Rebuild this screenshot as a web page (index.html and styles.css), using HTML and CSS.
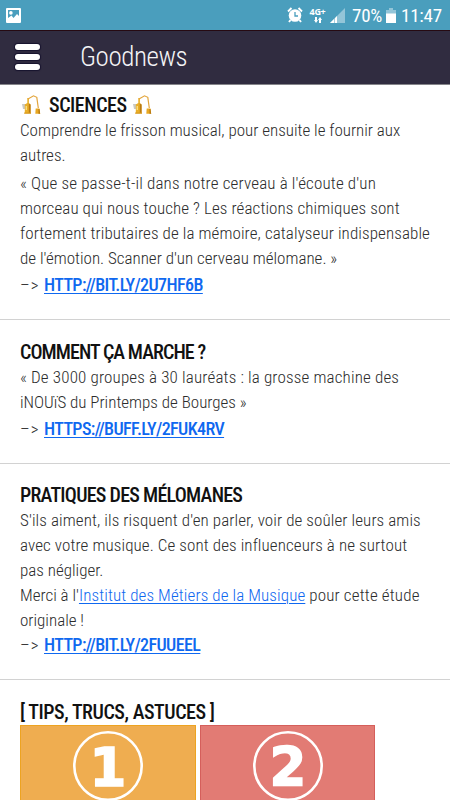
FILE: index.html
```html
<!DOCTYPE html>
<html lang="fr">
<head>
    <meta charset="UTF-8">
    <meta name="viewport" content="width=device-width, initial-scale=1.0">
    <title>Goodnews</title>
    <link rel="stylesheet" href="styles.css">
</head>
<body>
    <!-- Alembic drawing shared by the headings -->
    <svg class="defs" width="0" height="0">
        <symbol id="alembic" viewBox="0 0 20 20">
            <path d="M1 9h4v5H2z" fill="#c9c9c4"/>
            <path d="M6.300 3h1.600v5l1.600 1.500V18H3.800V9.500L6.300 8z" fill="#e9ae28"/>
            <path d="M7.800 8.500V18h1.800V9.500z" fill="#b97a12"/>
            <path d="M4.600 11h1.300v4H4.600z" fill="#fbe08a"/>
            <path d="M7 4L12.500 .8l3.300 1.500L17.300 13" fill="none" stroke="#e3a53c" stroke-width="1.200"/>
            <path d="M3.200 17.500h6.800v1.300H3.200z" fill="#d99a1c"/>
            <path d="M14.700 13.500h3.800l.7 5.300h-4.900z" fill="#e8a822"/>
            <path d="M17.500 14h1l.7 4.800h-1.700z" fill="#b97a12"/>
        </symbol>
    </svg>

    <!-- Phone status bar -->
    <div class="status-bar">
        <svg class="picture-icon" width="15" height="15" viewBox="0 0 15 15">
            <path fill="#fff" fill-rule="evenodd" d="M1 0h13a1 1 0 0 1 1 1v13a1 1 0 0 1-1 1H1a1 1 0 0 1-1-1V1a1 1 0 0 1 1-1zM2 2v8l3.500-2.500L7.500 10 11 6l2 2V2z"/>
            <circle cx="4.900" cy="4.900" r="1.800" fill="#fff"/>
        </svg>
        <svg class="alarm-icon" width="16" height="16" viewBox="0 0 16 16">
            <circle cx="8" cy="8.500" r="6.300" fill="#fff"/>
            <path d="M1 4.500L4.500 1M15 4.500L11.500 1M3.500 13L2 15M12.500 13L14 15" stroke="#fff" stroke-width="1.900"/>
            <path d="M8 5v4h3" fill="none" stroke="#4a9ebd" stroke-width="1.300"/>
        </svg>
        <div class="network">
            <span>4G+</span>
            <svg width="10" height="6" viewBox="0 0 10 6">
                <path d="M2 0h2v3h1L3 6 1 3h1zM6 6h2V3h1L7 0 5 3h1z" fill="#fff"/>
            </svg>
        </div>
        <svg class="signal-icon" width="15" height="15" viewBox="0 0 15 15">
            <path d="M15 0v15H0z" fill="#93c5d8"/>
            <path d="M7 8v7H4.800v-4.800zM4 11v4H0z" fill="#fff"/>
        </svg>
        <span class="battery-level">70%</span>
        <svg class="battery-icon" width="10" height="15" viewBox="0 0 10 15">
            <path d="M3 0h4v2h3v4H0V2h3z" fill="#93c5d8"/>
            <path d="M0 5.500h10V15H0z" fill="#fff"/>
        </svg>
        <span class="clock">11:47</span>
    </div>

    <!-- App header -->
    <header>
        <div class="menu-button">
            <span></span>
            <span></span>
            <span></span>
        </div>
        <h1>Goodnews</h1>
    </header>

    <!-- News list -->
    <main>
        <article class="first">
            <h2 class="sciences">
                <svg width="20" height="20"><use href="#alembic"/></svg>
                SCIENCES
                <svg width="20" height="20"><use href="#alembic"/></svg>
            </h2>
            <p>
                <span class="line">Comprendre le frisson musical, pour ensuite le fournir aux</span>
                <span class="line">autres.</span>
            </p>
            <p class="quote">
                <span class="line wider">« Que se passe-t-il dans notre cerveau à l'écoute d'un</span>
                <span class="line wide">morceau qui nous touche ? Les réactions chimiques sont</span>
                <span class="line wide">fortement tributaires de la mémoire, catalyseur indispensable</span>
                <span class="line">de l'émotion. Scanner d'un cerveau mélomane. »</span>
            </p>
            <p class="more"><span class="arrow">–&gt;</span><a href="#">HTTP://BIT.LY/2U7HF6B</a></p>
        </article>

        <article>
            <h2 class="tight">COMMENT ÇA MARCHE ?</h2>
            <p>
                <span class="line wider">« De 3000 groupes à 30 lauréats : la grosse machine des</span>
                <span class="line">iNOUïS du Printemps de Bourges »</span>
            </p>
            <p class="more"><span class="arrow">–&gt;</span><a href="#">HTTPS://BUFF.LY/2FUK4RV</a></p>
        </article>

        <article class="raised">
            <h2 class="snug">PRATIQUES DES MÉLOMANES</h2>
            <p>
                <span class="line wide">S'ils aiment, ils risquent d'en parler, voir de soûler leurs amis</span>
                <span class="line wide">avec votre musique. Ce sont des influenceurs à ne surtout</span>
                <span class="line">pas négliger.</span>
                <span class="line">Merci à l'<a class="wide" href="#">Institut des Métiers de la Musique</a><span class="wider"> pour cette étude</span></span>
                <span class="line">originale !</span>
            </p>
            <p class="more close"><span class="arrow">–&gt;</span><a href="#">HTTP://BIT.LY/2FUUEEL</a></p>
        </article>

        <article>
            <h2>[ TIPS, TRUCS, ASTUCES ]</h2>
            <div class="tips">
                <div class="tip orange">
                    <svg width="72" height="72" viewBox="0 0 72 72">
                        <circle cx="36" cy="36" r="33.700"/>
                        <text x="36" y="56">1</text>
                    </svg>
                </div>
                <div class="tip red">
                    <svg width="72" height="72" viewBox="0 0 72 72">
                        <circle cx="36" cy="36" r="33.700"/>
                        <text x="36" y="55">2</text>
                    </svg>
                </div>
            </div>
        </article>
    </main>
</body>
</html>
```
FILE: styles.css
```css
/* General body styles: condensed light text on white */
body {
    margin: 0;
    height: 800px;
    overflow: hidden;
    background-color: white;
    color: #2c2c2c;
    font-family: Roboto, "Liberation Sans", sans-serif;
    font-stretch: 75%;
    font-weight: 300;
    font-size: 17px;
    line-height: 25px;
}

.defs {
    display: block;
}

/* Status bar */
.status-bar {
    display: flex;
    align-items: center;
    height: 30px;
    padding: 0 8px 0 6px;
    background-color: #4a9ebd;
    color: white;
    font-size: 19px;
    font-weight: 400;
    white-space: nowrap;
}

.status-bar svg {
    flex: none;
}

.alarm-icon {
    margin-left: auto;
}

.network {
    display: flex;
    flex-direction: column;
    align-items: center;
    width: 17px;
    margin: 0 4px 0 6px;
    font: bold 9px "Open Sans", sans-serif;
    line-height: 10px;
    letter-spacing: -0.3px;
}

.battery-level {
    width: 30px;
    margin: 0 4px 0 7px;
    letter-spacing: -0.2px;
}

.clock {
    width: 41px;
    margin: 0 0 0 5px;
    letter-spacing: -0.2px;
}

/* App header */
header {
    display: flex;
    align-items: center;
    box-sizing: border-box;
    height: 55px;
    padding-left: 15px;
    background-color: #302c40;
    border-top: 1px solid #260a12;
    border-bottom: 1px solid #85858a;
    color: #f4f4f6;
}

.menu-button {
    display: flex;
    flex-direction: column;
    gap: 4px;
    width: 25px;
    margin: 0 40px 2px 0;
}

.menu-button span {
    height: 6px;
    border-radius: 3px;
    background-color: white;
    box-shadow: 0 0 1px 1px #17132e;
}

h1 {
    margin: 0;
    font-size: 27px;
    font-weight: 300;
    letter-spacing: -0.45px;
}

/* Articles separated by a thin line */
article {
    padding: 20px 20px 21px;
    border-bottom: 1px solid #d2d2d2;
}

article.first {
    padding-top: 8px;
}

article.raised {
    padding-top: 19px;
}

h2 {
    margin: 0 0 1px;
    color: #111;
    font-size: 20px;
    font-weight: 500;
    line-height: 24px;
    letter-spacing: -0.45px;
}

h2.tight {
    letter-spacing: -0.93px;
}

h2.snug {
    letter-spacing: -0.74px;
}

.sciences {
    display: flex;
    align-items: center;
    gap: 5px;
}

.sciences svg:first-child {
    margin: 0 3px 0 1px;
}

p {
    margin: 0;
}

.quote {
    margin-top: 3px;
}

.more {
    margin-top: 2px;
}

.more.close {
    margin-top: 0;
}

.line {
    display: block;
    white-space: nowrap;
}

.wide {
    letter-spacing: 0.1px;
}

.wider {
    letter-spacing: 0.16px;
}

.arrow {
    display: inline-block;
    width: 24px;
    letter-spacing: 1px;
}

a {
    color: #0f68f0;
    text-decoration: underline;
    text-decoration-thickness: 1px;
    text-underline-offset: 2px;
}

.more a {
    font-size: 18px;
    font-weight: 500;
    line-height: 20px;
    letter-spacing: -0.6px;
}

/* Numbered tips */
.tips {
    display: flex;
    gap: 4px;
}

.tip {
    display: flex;
    justify-content: center;
    box-sizing: border-box;
    width: 175px;
    height: 175px;
    padding-top: 4px;
}

.orange {
    width: 176px;
    background-color: #efad50;
    border: 1px solid #eda321;
}

.red {
    background-color: #e27b74;
    border: 1px solid #d55f5b;
}

.tip circle {
    fill: none;
    stroke: white;
    stroke-width: 2.600px;
}

.tip text {
    fill: white;
    stroke: white;
    stroke-width: 1.500px;
    font: bold 53px "DejaVu Sans", sans-serif;
    text-anchor: middle;
}
```
